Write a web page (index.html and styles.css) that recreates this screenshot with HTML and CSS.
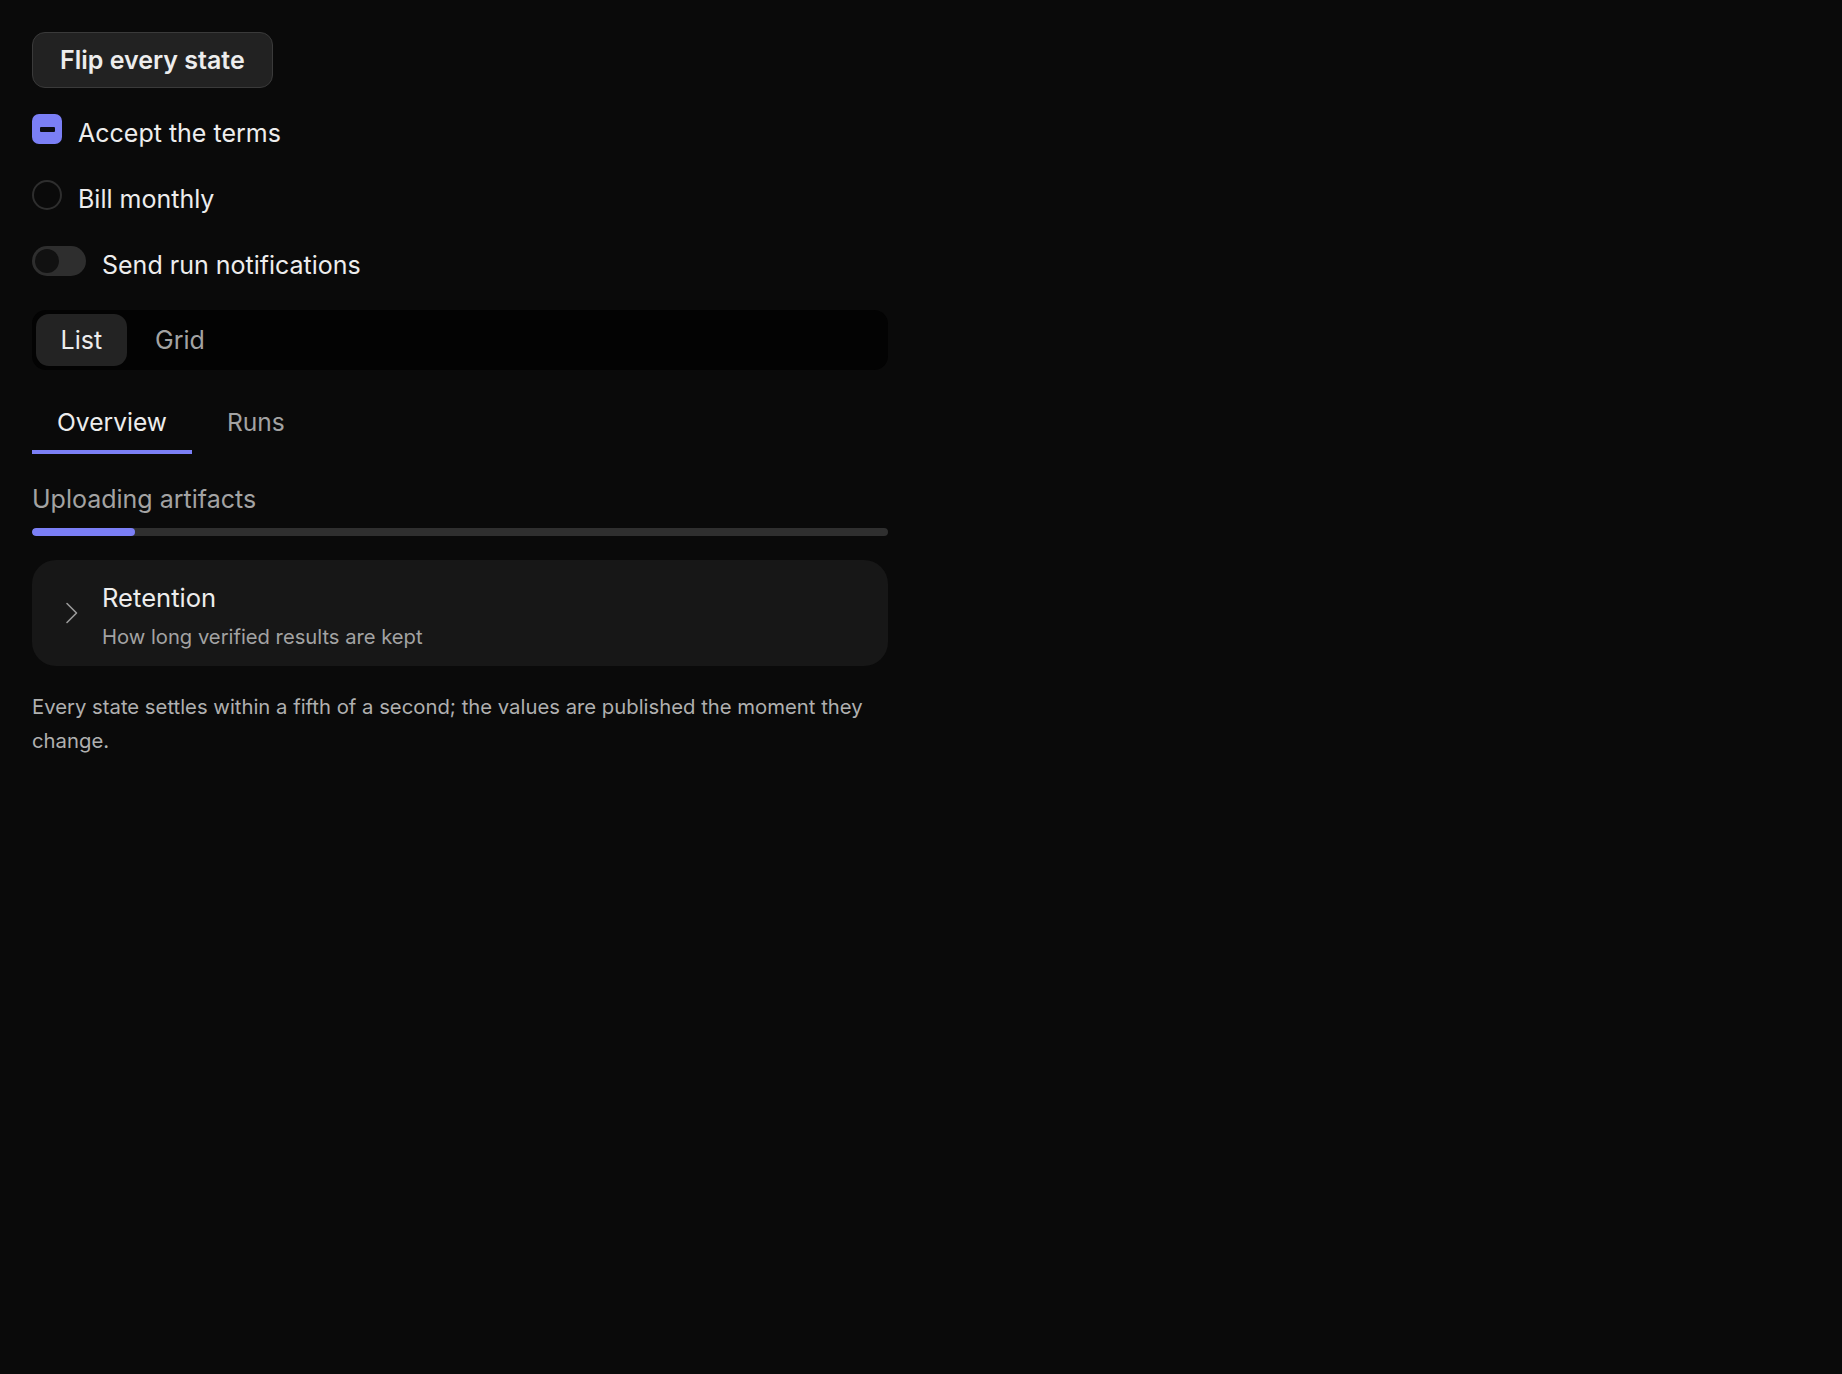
FILE: index.html
```html
<!DOCTYPE html>
<html lang="en">
<head>
<meta charset="utf-8">
<title>States</title>
<link rel="stylesheet" href="styles.css">
</head>
<body>
<main class="panel">
  <button class="flip-btn" type="button">Flip every state</button>

  <label class="check-row row-check">
    <span class="checkbox"><span class="dash"></span></span>
    <span class="row-label">Accept the terms</span>
  </label>

  <label class="check-row row-radio">
    <span class="radio"></span>
    <span class="row-label">Bill monthly</span>
  </label>

  <label class="check-row row-toggle">
    <span class="toggle"><span class="knob"></span></span>
    <span class="row-label">Send run notifications</span>
  </label>

  <div class="segmented">
    <span class="seg-item active">List</span>
    <span class="seg-item">Grid</span>
  </div>

  <div class="tabs">
    <span class="tab active">Overview</span>
    <span class="tab">Runs</span>
  </div>

  <div class="progress-block">
    <div class="progress-label">Uploading artifacts</div>
    <div class="progress-track"><div class="progress-fill" style="width: 12%"></div></div>
  </div>

  <div class="card">
    <svg class="chevron" width="14" height="22" viewBox="0 0 14 22" aria-hidden="true">
      <path d="M2 1.5 L11.5 11 L2 20.5" fill="none" stroke="#9a9a9a" stroke-width="1.6" stroke-linecap="round" stroke-linejoin="round"/>
    </svg>
    <div class="card-text">
      <div class="card-title">Retention</div>
      <div class="card-sub">How long verified results are kept</div>
    </div>
  </div>

  <p class="note">Every state settles within a fifth of a second; the values are published the moment they change.</p>
</main>
</body>
</html>
```

FILE: styles.css
```css
* { box-sizing: border-box; }

html, body {
  margin: 0;
  background: #0a0a0a;
}

body {
  font-family: Inter, "Noto Sans", sans-serif;
  color: #ededed;
  padding: 32px;
}

.panel {
  width: 856px;
  display: flex;
  flex-direction: column;
  align-items: flex-start;
}

.flip-btn {
  height: 56px;
  padding: 0 27px;
  background: #222222;
  border: 1.5px solid #3a3a3a;
  border-radius: 13px;
  color: #ededed;
  font-family: inherit;
  font-size: 25px;
  font-weight: 600;
}

.check-row {
  display: flex;
  align-items: flex-start;
  gap: 16px;
  line-height: 38px;
  font-size: 25px;
  margin-top: 26px;
}

.row-radio, .row-toggle { margin-top: 28px; }

.checkbox {
  width: 30px;
  height: 30px;
  border-radius: 7px;
  background: #7b7ff6;
  display: flex;
  align-items: center;
  justify-content: center;
  flex: none;
}

.dash {
  width: 15px;
  height: 5px;
  background: #0c0c14;
  border-radius: 1px;
}

.radio {
  width: 30px;
  height: 30px;
  border-radius: 50%;
  border: 2px solid #2e2e2e;
  background: #0a0a0a;
  flex: none;
}

.toggle {
  width: 54px;
  height: 30px;
  border-radius: 15px;
  background: #2e2e2e;
  padding: 3px;
  flex: none;
  display: flex;
}

.knob {
  width: 24px;
  height: 24px;
  border-radius: 50%;
  background: #111111;
}

.segmented {
  margin-top: 26px;
  align-self: stretch;
  height: 60px;
  padding: 4px;
  background: #030303;
  border-radius: 14px;
  display: flex;
  gap: 4px;
}

.seg-item {
  display: flex;
  align-items: center;
  padding: 0 24.5px;
  border-radius: 13px;
  font-size: 25px;
  color: #a3a3a3;
}

.seg-item.active {
  background: #232323;
  color: #ededed;
}

.tabs {
  margin-top: 26px;
  display: flex;
  gap: 10px;
}

.tab {
  padding: 8px 25px 10px;
  line-height: 36px;
  font-size: 24.6px;
  color: #a3a3a3;
  border-bottom: 4px solid transparent;
}

.tab.active {
  color: #ededed;
  border-bottom-color: #7b7ff6;
}

.progress-block {
  margin-top: 26px;
  align-self: stretch;
  display: flex;
  flex-direction: column;
  gap: 10px;
}

.progress-label {
  font-size: 25px;
  line-height: 38px;
  color: #a3a3a3;
}

.progress-track {
  height: 8px;
  border-radius: 4px;
  background: #2f2f2f;
  overflow: hidden;
}

.progress-fill {
  height: 100%;
  border-radius: 4px;
  background: #7b7ff6;
}

.card {
  margin-top: 24px;
  align-self: stretch;
  height: 106px;
  background: #171717;
  border-radius: 24px;
  display: flex;
  align-items: center;
  padding: 0 30px 0 33px;
  gap: 23px;
}

.chevron { flex: none; }

.card-text {
  display: flex;
  flex-direction: column;
  margin-top: 6px;
}

.card-title {
  font-size: 25.6px;
  line-height: 36px;
  color: #ededed;
}

.card-sub {
  margin-top: 6px;
  font-size: 20.2px;
  line-height: 30px;
  color: #a3a3a3;
}

.note {
  margin: 24px 0 0;
  font-size: 20.3px;
  line-height: 34px;
  color: #b0b0b0;
}
```
